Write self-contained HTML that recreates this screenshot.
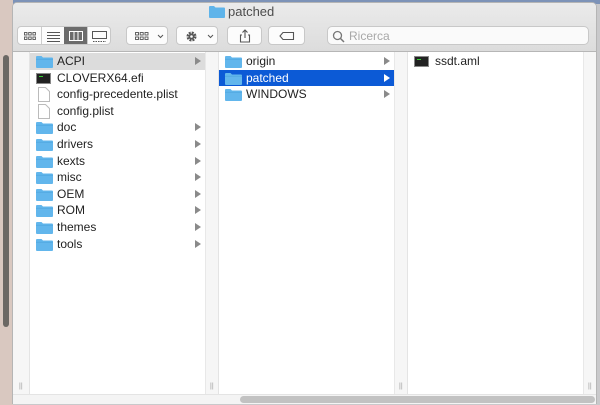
<!DOCTYPE html>
<html><head><meta charset="utf-8"><style>
*{margin:0;padding:0;box-sizing:border-box}
body{width:600px;height:405px;overflow:hidden;background:#c9c9cb;font-family:"Liberation Sans",sans-serif;position:relative}
.abs{position:absolute}
.row{position:absolute;height:16.6px;font-size:12px;color:#222;line-height:16px}
.row span{position:absolute;left:27px;top:0}
.arr{position:absolute;width:0;height:0;border-left:6px solid #8a8a8a;border-top:4px solid transparent;border-bottom:4px solid transparent;top:4px}
.btn{position:absolute;top:26px;height:19px;background:#fcfcfc;border:1px solid #c8c8c8;border-radius:4px}
</style></head><body>
<div class="abs" style="left:0;top:0;width:600px;height:4px;background:#7d93b8"></div>
<div class="abs" style="left:0;top:0;width:13px;height:405px;background:#d9c8c0"></div>
<div class="abs" style="left:3px;top:55px;width:6px;height:272px;background:#6b6864;border-radius:3px"></div>
<div class="abs" style="left:12px;top:2px;width:585px;height:402px;background:#f6f6f6;border:1px solid #b5b5b5;border-radius:5px 5px 0 0;overflow:hidden">
 <div class="abs" style="left:0;top:0;width:585px;height:49px;background:linear-gradient(#ebebeb,#dcdcdc);border-bottom:1px solid #b6b6b6"></div>
</div>
<svg class="abs" style="left:209px;top:5px" width="16" height="13"><path d="M0 2a1 1 0 0 1 1-1h4l1.5 1.5H15a1 1 0 0 1 1 1V12a1 1 0 0 1-1 1H1a1 1 0 0 1-1-1z" fill="#5fb4ea"/></svg>
<div class="abs" style="left:228px;top:4px;font-size:13px;color:#4d4d4d">patched</div>
<div class="btn" style="left:17px;width:94px;overflow:hidden">
 <div class="abs" style="left:46px;top:0;width:23px;height:19px;background:#6c6c6c"></div>
 <div class="abs" style="left:23px;top:0;width:1px;height:19px;background:#ccc"></div>
 <div class="abs" style="left:69px;top:0;width:1px;height:19px;background:#ccc"></div>
 <svg class="abs" style="left:6px;top:5px" width="12" height="8"><g fill="none" stroke="#555" stroke-width="0.9"><rect x=".5" y=".5" width="2.5" height="2.5"/><rect x="4.7" y=".5" width="2.5" height="2.5"/><rect x="8.9" y=".5" width="2.5" height="2.5"/><rect x=".5" y="5" width="2.5" height="2.5"/><rect x="4.7" y="5" width="2.5" height="2.5"/><rect x="8.9" y="5" width="2.5" height="2.5"/></g></svg>
 <svg class="abs" style="left:29px;top:4px" width="13" height="11"><path d="M0 1.5h13M0 4.5h13M0 7.5h13M0 10.5h13" stroke="#555"/></svg>
 <svg class="abs" style="left:51px;top:4px" width="14" height="10"><rect x=".5" y=".5" width="13" height="9" fill="none" stroke="#fff"/><path d="M5 0v10M9 0v10" stroke="#fff"/></svg>
 <svg class="abs" style="left:74px;top:4px" width="15" height="12"><rect x=".5" y=".5" width="14" height="7" fill="none" stroke="#555"/><path d="M1 10.5h13" stroke="#555" stroke-dasharray="1.5 1"/></svg>
</div>
<div class="btn" style="left:126px;width:42px"><svg class="abs" style="left:8px;top:5px" width="14" height="8"><g fill="none" stroke="#555" stroke-width="0.9"><rect x=".5" y=".5" width="3" height="2.5"/><rect x="5.2" y=".5" width="3" height="2.5"/><rect x="10" y=".5" width="3" height="2.5"/><rect x=".5" y="5" width="3" height="2.5"/><rect x="5.2" y="5" width="3" height="2.5"/><rect x="10" y="5" width="3" height="2.5"/></g></svg><svg class="abs" style="left:30px;top:7px" width="7" height="5"><path d="M1 1l2.5 2.5L6 1" fill="none" stroke="#555"/></svg></div>
<div class="btn" style="left:176px;width:42px"><svg class="abs" style="left:8px;top:3px" width="13" height="13"><circle cx="6.5" cy="6.5" r="3.8" fill="none" stroke="#555" stroke-width="2.4" stroke-dasharray="2 1"/><circle cx="6.5" cy="6.5" r="3" fill="#555"/><circle cx="6.5" cy="6.5" r="1.3" fill="#fcfcfc"/></svg><svg class="abs" style="left:30px;top:7px" width="7" height="5"><path d="M1 1l2.5 2.5L6 1" fill="none" stroke="#555"/></svg></div>
<div class="btn" style="left:227px;width:35px"><svg class="abs" style="left:11px;top:2px" width="12" height="14"><path d="M3 6H1.5v7h9V6H9M6 9V1M3.5 3.5L6 1l2.5 2.5" fill="none" stroke="#555" stroke-width="1.1"/></svg></div>
<div class="btn" style="left:268px;width:37px"><svg class="abs" style="left:10px;top:4px" width="16" height="10"><path d="M1 5L4 1.5h10.5v7H4z" fill="none" stroke="#555" stroke-width="1.1"/></svg></div>
<div class="btn" style="left:327px;width:262px;border-radius:5px;background:#fafafa"><svg class="abs" style="left:4px;top:3px" width="13" height="13"><circle cx="5.5" cy="5.5" r="4" fill="none" stroke="#777" stroke-width="1.3"/><path d="M8.5 8.5L12 12" stroke="#777" stroke-width="1.5"/></svg><div class="abs" style="left:21px;top:2px;font-size:12px;color:#a8a8a8">Ricerca</div></div>
<div class="abs" style="left:13px;top:52px;width:17px;height:342px;background:#f6f6f6;border-right:1px solid #e4e4e4"></div>
<div class="abs" style="left:30px;top:52px;width:175px;height:342px;background:#fff"></div>
<div class="abs" style="left:205px;top:52px;width:14px;height:342px;background:#f6f6f6;border-left:1px solid #e8e8e8;border-right:1px solid #e4e4e4"></div>
<div class="abs" style="left:219px;top:52px;width:175px;height:342px;background:#fff"></div>
<div class="abs" style="left:394px;top:52px;width:14px;height:342px;background:#f6f6f6;border-left:1px solid #e8e8e8;border-right:1px solid #e4e4e4"></div>
<div class="abs" style="left:408px;top:52px;width:175px;height:342px;background:#fff"></div>
<div class="abs" style="left:583px;top:52px;width:13px;height:342px;background:#f6f6f6;border-left:1px solid #e8e8e8"></div>
<div class="abs" style="left:13px;top:394px;width:583px;height:10px;background:#f4f4f4;border-top:1px solid #e4e4e4"></div>
<div class="abs" style="left:240px;top:396px;width:355px;height:7px;background:#c2c2c2;border-radius:4px"></div>
<div class="abs" style="left:19px;top:383px;font-size:7px;color:#999">||</div>
<div class="abs" style="left:210px;top:383px;font-size:7px;color:#999">||</div>
<div class="abs" style="left:399px;top:383px;font-size:7px;color:#999">||</div>
<div class="abs" style="left:588px;top:383px;font-size:7px;color:#999">||</div>
<div id="c1"></div>
<script>
var fold='<svg style="position:absolute;left:6px;top:2px" width="17" height="13"><path d="M0 2a1 1 0 0 1 1-1h4.5l1.5 1.5H16a1 1 0 0 1 1 1V12a1 1 0 0 1-1 1H1a1 1 0 0 1-1-1z" fill="#62b6ec"/><path d="M0 4.2H17" stroke="#4aa2dc" stroke-width="0.6"/></svg>';
var exe='<div style="position:absolute;left:6px;top:3px;width:15px;height:11px;background:#222;border:1px solid #888"><div style="margin:2px 0 0 2px;width:4px;height:1px;background:#3c3"></div></div>';
var doc='<svg style="position:absolute;left:8px;top:1px" width="12" height="15"><path d="M.5.5h7l4 4v10H.5z" fill="#fff" stroke="#bbb"/></svg>';
var h='';
function row(x,i,w,icon,t,arrow,sel){var y=53+i*16.6;var bg=sel==1?'#dcdcdc':sel==2?'#0c5ad6':'transparent';var c=sel==2?'#fff':'#222';
h+='<div class="row" style="left:'+x+'px;top:'+y+'px;width:'+w+'px;background:'+bg+';color:'+c+'">'+icon+'<span>'+t+'</span>'+(arrow?'<div class="arr" style="right:4px;border-left-color:'+(sel==2?'#fff':'#8a8a8a')+'"></div>':'')+'</div>';}
var c1=[[fold,'ACPI',1,1],[exe,'CLOVERX64.efi',0],[doc,'config-precedente.plist',0],[doc,'config.plist',0],[fold,'doc',1],[fold,'drivers',1],[fold,'kexts',1],[fold,'misc',1],[fold,'OEM',1],[fold,'ROM',1],[fold,'themes',1],[fold,'tools',1]];
c1.forEach(function(r,i){row(30,i,175,r[0],r[1],r[2],r[3]||0)});
row(219,0,175,fold,'origin',1,0);row(219,1,175,fold,'patched',1,2);row(219,2,175,fold,'WINDOWS',1,0);
row(408,0,175,exe,'ssdt.aml',0,0);
document.getElementById('c1').innerHTML=h;
</script>
</body></html>
